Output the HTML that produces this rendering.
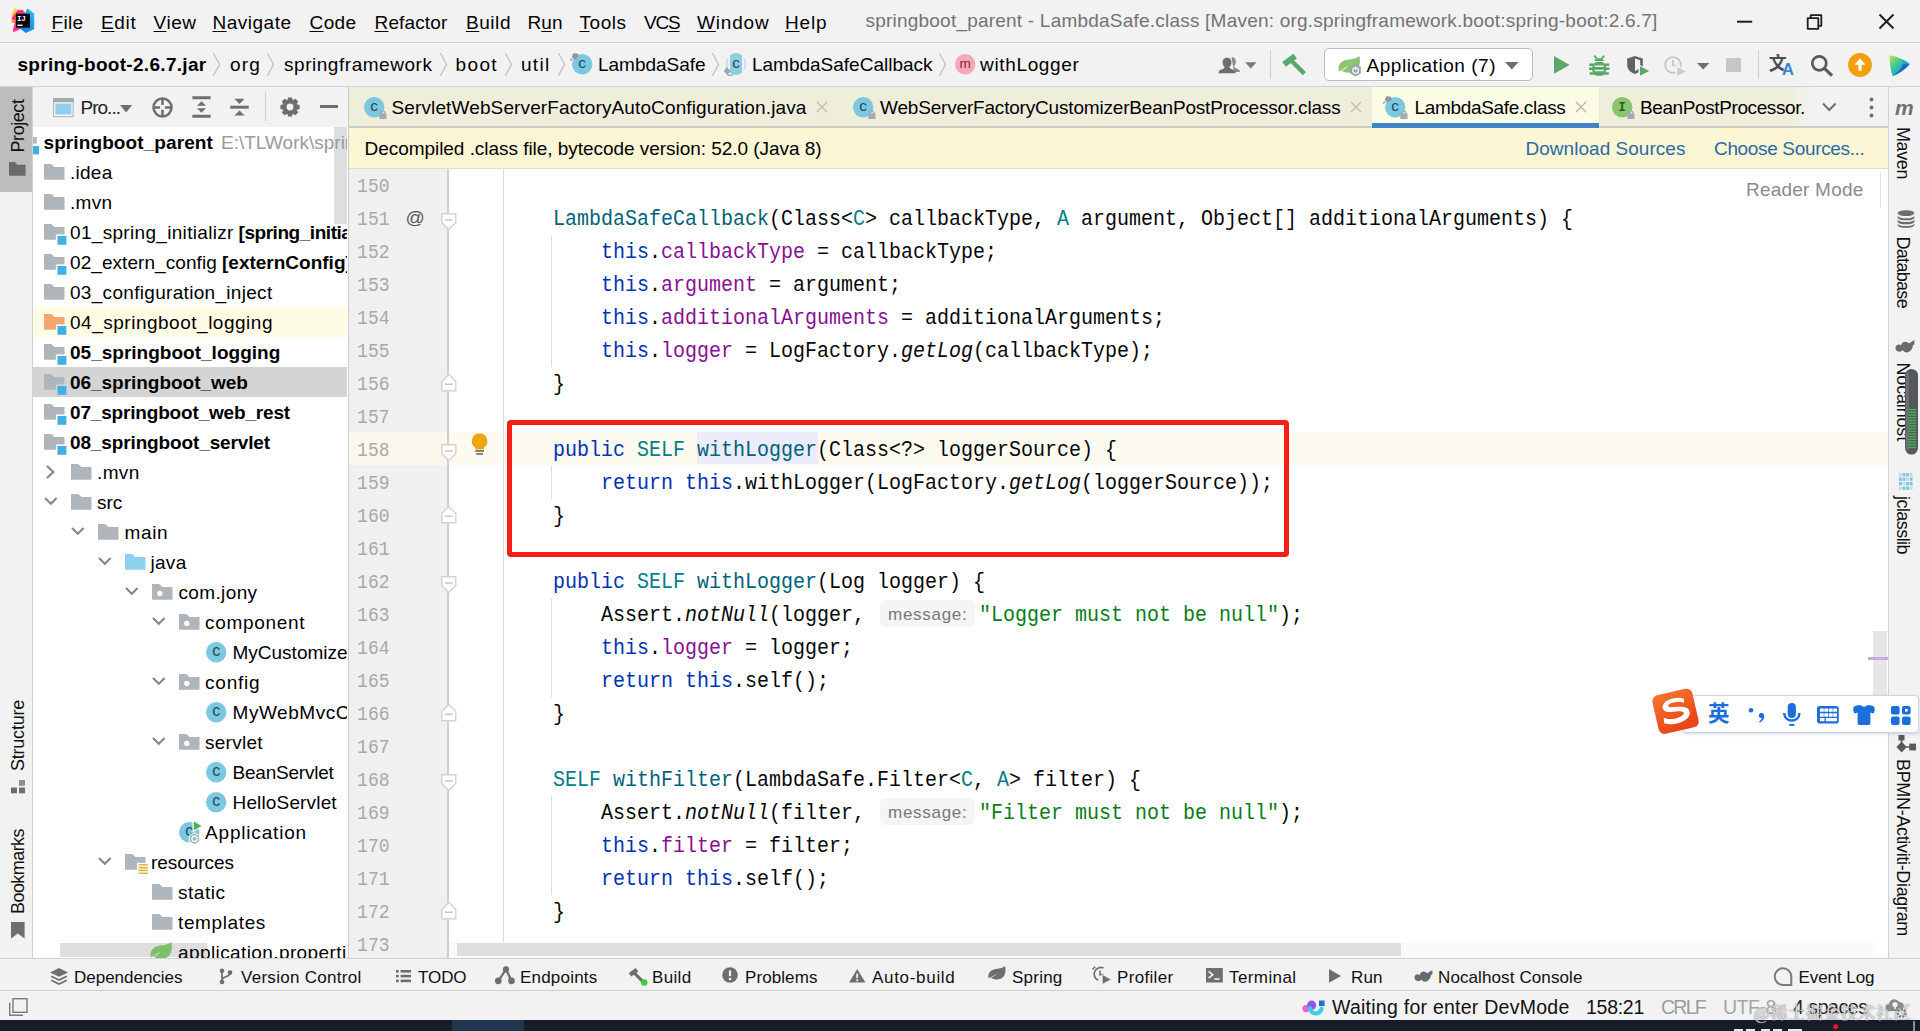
<!DOCTYPE html><html lang="en"><head><meta charset="utf-8"><title>springboot_parent - LambdaSafe.class</title><style>

html,body{margin:0;padding:0;}
body{width:1920px;height:1031px;position:relative;overflow:hidden;background:#f2f2f2;font-family:"Liberation Sans", "Noto Sans CJK SC", sans-serif;}
#r{position:absolute;left:0;top:0;width:1920px;height:1031px;overflow:hidden;}
#r div,#r svg,#r span.t{position:absolute;}
span.t{white-space:pre;line-height:24px;height:24px;}
span.m{font-family:"Liberation Mono", monospace;transform:scaleY(1.10);transform-origin:0 17.33px;}
u{text-decoration-thickness:1px;text-underline-offset:2px;}

</style></head><body><div id="r">
<div style="left:0px;top:0px;width:1920px;height:42px;background:#f2f2f2;"></div>
<div style="left:0px;top:42px;width:1920px;height:1px;background:#d1d1d1;"></div>
<div style="left:0px;top:43px;width:1920px;height:43px;background:#f2f2f2;"></div>
<div style="left:0px;top:86px;width:1920px;height:1px;background:#d1d1d1;"></div>
<div style="left:0px;top:87px;width:32px;height:871px;background:#f2f2f2;"></div>
<div style="left:0px;top:87px;width:32px;height:105px;background:#bdbdbd;"></div>
<div style="left:32px;top:87px;width:1px;height:871px;background:#d1d1d1;"></div>
<div style="left:33px;top:87px;width:315px;height:40px;background:#f2f2f2;"></div>
<div style="left:33px;top:127px;width:315px;height:831px;background:#ffffff;"></div>
<div style="left:33px;top:307px;width:314px;height:30px;background:#fffce6;"></div>
<div style="left:33px;top:367px;width:314px;height:30px;background:#d4d4d4;"></div>
<div style="left:334px;top:127px;width:13px;height:97px;background:#dedede;"></div>
<div style="left:60px;top:943px;width:147px;height:14px;background:#dedede;"></div>
<div style="left:347.6px;top:87px;width:1.1px;height:871px;background:#cbcbcb;"></div>
<div style="left:349px;top:87px;width:1539px;height:39px;background:#eeeedb;"></div>
<div style="left:349px;top:125.8px;width:1539px;height:2.2px;background:#cdcdc6;"></div>
<div style="left:1372px;top:87px;width:227px;height:39px;background:#fcfce6;"></div>
<div style="left:1372px;top:122.5px;width:227px;height:5px;background:#4083c9;"></div>
<div style="left:1788px;top:87px;width:100px;height:39px;background:linear-gradient(90deg,rgba(242,242,242,0) 0,#f2f2f2 24px);"></div>
<div style="left:349px;top:128px;width:1539px;height:40px;background:#fcf6d5;"></div>
<div style="left:349px;top:168px;width:1539px;height:1px;background:#dcdcdc;"></div>
<div style="left:349px;top:169px;width:1539px;height:789px;background:#ffffff;"></div>
<div style="left:349px;top:431.5px;width:1539px;height:33px;background:#fdfbf0;"></div>
<div style="left:349px;top:169px;width:98px;height:789px;background:#f0f0f0;"></div>
<div style="left:349px;top:431.5px;width:98px;height:33px;background:#faf8ec;"></div>
<div style="left:447px;top:169px;width:1.5px;height:789px;background:#cfcfcf;"></div>
<div style="left:503px;top:169px;width:1px;height:789px;background:#dcdcdc;"></div>
<div style="left:551px;top:235px;width:1px;height:132px;background:#dedede;"></div>
<div style="left:551px;top:466px;width:1px;height:33px;background:#dedede;"></div>
<div style="left:551px;top:598px;width:1px;height:99px;background:#dedede;"></div>
<div style="left:551px;top:796px;width:1px;height:99px;background:#dedede;"></div>
<div style="left:697px;top:432.2px;width:120.5px;height:32.3px;background:#edecfa;"></div>
<div style="left:880px;top:600.0px;width:95px;height:27px;background:#f5f5f5;border-radius:6px;"></div>
<div style="left:880px;top:798.0px;width:95px;height:27px;background:#f5f5f5;border-radius:6px;"></div>
<div style="left:1873px;top:631px;width:14px;height:66px;background:#e6e6e6;"></div>
<div style="left:1868px;top:657.3px;width:20px;height:2.6px;background:#c9a8e6;"></div>
<div style="left:1880px;top:172px;width:1px;height:36px;background:#e3e3e3;"></div>
<div style="left:449px;top:942px;width:1424px;height:16px;background:#fafafa;"></div>
<div style="left:457px;top:943px;width:944px;height:13px;background:#dfdfdf;"></div>
<div style="left:1888px;top:87px;width:1px;height:871px;background:#d1d1d1;"></div>
<div style="left:1889px;top:87px;width:31px;height:871px;background:#f2f2f2;"></div>
<div style="left:506.5px;top:420px;width:782.5px;height:137px;background:transparent;border:5px solid #f51f17;border-radius:4px;box-sizing:border-box;"></div>
<div style="left:1269.5px;top:50px;width:1.2px;height:29px;background:#cfcfcf;"></div>
<div style="left:1324px;top:48px;width:208.5px;height:32.5px;background:#ffffff;border:1.300px solid #bdbdbd;border-radius:5px;box-sizing:border-box;"></div>
<div style="left:1725.5px;top:57.5px;width:15.5px;height:14.8px;background:#c6c6c6;"></div>
<div style="left:1757.6px;top:50px;width:1.2px;height:29px;background:#cfcfcf;"></div>
<div style="left:264.8px;top:92px;width:1.2px;height:28.5px;background:#cfcfcf;"></div>
<div style="left:320px;top:105.4px;width:18.2px;height:3px;background:#6e6e6e;"></div>
<span class="t" style="left:51.50px;top:11.02px;font-size:19px;color:#000;letter-spacing:0.344px;"><u>F</u>ile</span>
<span class="t" style="left:101.00px;top:11.02px;font-size:19px;color:#000;letter-spacing:0.684px;"><u>E</u>dit</span>
<span class="t" style="left:153.50px;top:11.02px;font-size:19px;color:#000;letter-spacing:0.535px;"><u>V</u>iew</span>
<span class="t" style="left:212.50px;top:11.02px;font-size:19px;color:#000;letter-spacing:0.498px;"><u>N</u>avigate</span>
<span class="t" style="left:309.50px;top:11.02px;font-size:19px;color:#000;letter-spacing:0.391px;"><u>C</u>ode</span>
<span class="t" style="left:374.50px;top:11.02px;font-size:19px;color:#000;letter-spacing:0.146px;"><u>R</u>efactor</span>
<span class="t" style="left:466.00px;top:11.02px;font-size:19px;color:#000;letter-spacing:0.547px;"><u>B</u>uild</span>
<span class="t" style="left:527.50px;top:11.02px;font-size:19px;color:#000;letter-spacing:0.036px;">R<u>u</u>n</span>
<span class="t" style="left:579.50px;top:11.02px;font-size:19px;color:#000;letter-spacing:0.528px;"><u>T</u>ools</span>
<span class="t" style="left:644.00px;top:11.02px;font-size:19px;color:#000;letter-spacing:-1.198px;">VC<u>S</u></span>
<span class="t" style="left:697.00px;top:11.02px;font-size:19px;color:#000;letter-spacing:0.818px;"><u>W</u>indow</span>
<span class="t" style="left:785.00px;top:11.02px;font-size:19px;color:#000;letter-spacing:0.852px;"><u>H</u>elp</span>
<span class="t" style="left:865.50px;top:9.02px;font-size:19px;color:#737373;letter-spacing:0.215px;">springboot_parent - LambdaSafe.class [Maven: org.springframework.boot:spring-boot:2.6.7]</span>
<span class="t" style="left:17.50px;top:53.32px;font-size:19px;color:#000;font-weight:bold;letter-spacing:0.303px;">spring-boot-2.6.7.jar</span>
<span class="t" style="left:230.00px;top:53.32px;font-size:19px;color:#000;letter-spacing:1.177px;">org</span>
<span class="t" style="left:284.00px;top:53.32px;font-size:19px;color:#000;letter-spacing:0.537px;">springframework</span>
<span class="t" style="left:455.50px;top:53.32px;font-size:19px;color:#000;letter-spacing:1.379px;">boot</span>
<span class="t" style="left:521.00px;top:53.32px;font-size:19px;color:#000;letter-spacing:1.301px;">util</span>
<span class="t" style="left:598.00px;top:53.32px;font-size:19px;color:#000;letter-spacing:-0.025px;">LambdaSafe</span>
<span class="t" style="left:752.00px;top:53.32px;font-size:19px;color:#000;letter-spacing:-0.007px;">LambdaSafeCallback</span>
<span class="t" style="left:980.00px;top:53.32px;font-size:19px;color:#000;letter-spacing:0.655px;">withLogger</span>
<span class="t" style="left:1366.50px;top:54.32px;font-size:19px;color:#000;letter-spacing:0.536px;">Application (7)</span>
<span class="t" style="left:80.50px;top:96.02px;font-size:19px;color:#222;letter-spacing:-0.984px;">Pro...</span>
<span class="t" style="left:391.50px;top:96.02px;font-size:19px;color:#000;letter-spacing:0.124px;">ServletWebServerFactoryAutoConfiguration.java</span>
<span class="t" style="left:880.00px;top:96.02px;font-size:19px;color:#000;letter-spacing:-0.185px;">WebServerFactoryCustomizerBeanPostProcessor.class</span>
<span class="t" style="left:1414.50px;top:96.02px;font-size:19px;color:#000;letter-spacing:-0.333px;">LambdaSafe.class</span>
<span class="t" style="left:1640.00px;top:96.02px;font-size:19px;color:#000;letter-spacing:-0.398px;">BeanPostProcessor.</span>
<span class="t" style="left:364.50px;top:137.12px;font-size:19px;color:#000;letter-spacing:-0.043px;">Decompiled .class file, bytecode version: 52.0 (Java 8)</span>
<span class="t" style="left:1525.50px;top:137.12px;font-size:19px;color:#2d6aa2;letter-spacing:0.032px;">Download Sources</span>
<span class="t" style="left:1714.00px;top:137.12px;font-size:19px;color:#2d6aa2;letter-spacing:-0.342px;">Choose Sources...</span>
<span class="t" style="left:1746.00px;top:177.92px;font-size:19px;color:#8a8a8a;letter-spacing:0.216px;">Reader Mode</span>
<span class="t" style="left:43.50px;top:130.82px;font-size:19px;color:#000;font-weight:bold;letter-spacing:0.097px;">springboot_parent</span>
<span class="t" style="left:221.00px;top:130.82px;font-size:19px;color:#9a9a9a;width:126.00px;overflow:hidden;">E:\TLWork\springboot_parent</span>
<span class="t" style="left:70.00px;top:160.82px;font-size:19px;color:#000;letter-spacing:0.259px;">.idea</span>
<span class="t" style="left:70.00px;top:190.82px;font-size:19px;color:#000;letter-spacing:0.328px;">.mvn</span>
<span class="t" style="left:70.00px;top:220.82px;font-size:19px;color:#000;letter-spacing:0.316px;">01_spring_initializr</span>
<span class="t" style="left:238.50px;top:220.82px;font-size:19px;color:#000;font-weight:bold;width:108.50px;overflow:hidden;letter-spacing:-0.45px;">[spring_initializr]</span>
<span class="t" style="left:70.00px;top:250.82px;font-size:19px;color:#000;letter-spacing:0.064px;">02_extern_config</span>
<span class="t" style="left:222.00px;top:250.82px;font-size:19px;color:#000;font-weight:bold;width:125.00px;overflow:hidden;">[externConfig]</span>
<span class="t" style="left:70.00px;top:280.82px;font-size:19px;color:#000;letter-spacing:0.308px;">03_configuration_inject</span>
<span class="t" style="left:70.00px;top:310.82px;font-size:19px;color:#000;letter-spacing:0.510px;">04_springboot_logging</span>
<span class="t" style="left:70.00px;top:340.82px;font-size:19px;color:#000;font-weight:bold;letter-spacing:0.011px;">05_springboot_logging</span>
<span class="t" style="left:70.00px;top:370.82px;font-size:19px;color:#000;font-weight:bold;letter-spacing:-0.037px;">06_springboot_web</span>
<span class="t" style="left:70.00px;top:400.82px;font-size:19px;color:#000;font-weight:bold;letter-spacing:-0.175px;">07_springboot_web_rest</span>
<span class="t" style="left:70.00px;top:430.82px;font-size:19px;color:#000;font-weight:bold;letter-spacing:-0.131px;">08_springboot_servlet</span>
<span class="t" style="left:97.00px;top:460.82px;font-size:19px;color:#000;letter-spacing:0.378px;">.mvn</span>
<span class="t" style="left:97.00px;top:490.82px;font-size:19px;color:#000;letter-spacing:-0.043px;">src</span>
<span class="t" style="left:124.50px;top:520.82px;font-size:19px;color:#000;letter-spacing:0.653px;">main</span>
<span class="t" style="left:150.50px;top:550.82px;font-size:19px;color:#000;letter-spacing:0.285px;">java</span>
<span class="t" style="left:178.40px;top:580.82px;font-size:19px;color:#000;letter-spacing:0.384px;">com.jony</span>
<span class="t" style="left:205.00px;top:610.82px;font-size:19px;color:#000;letter-spacing:0.687px;">component</span>
<span class="t" style="left:232.50px;top:640.82px;font-size:19px;color:#000;width:114.50px;overflow:hidden;">MyCustomizer</span>
<span class="t" style="left:205.00px;top:670.82px;font-size:19px;color:#000;letter-spacing:0.783px;">config</span>
<span class="t" style="left:232.50px;top:700.82px;font-size:19px;color:#000;width:114.50px;overflow:hidden;letter-spacing:0.55px;">MyWebMvcConfig</span>
<span class="t" style="left:205.00px;top:730.82px;font-size:19px;color:#000;letter-spacing:0.262px;">servlet</span>
<span class="t" style="left:232.50px;top:760.82px;font-size:19px;color:#000;letter-spacing:-0.220px;">BeanServlet</span>
<span class="t" style="left:232.50px;top:790.82px;font-size:19px;color:#000;letter-spacing:0.155px;">HelloServlet</span>
<span class="t" style="left:205.00px;top:820.82px;font-size:19px;color:#000;letter-spacing:0.822px;">Application</span>
<span class="t" style="left:151.00px;top:850.82px;font-size:19px;color:#000;letter-spacing:-0.047px;">resources</span>
<span class="t" style="left:178.00px;top:880.82px;font-size:19px;color:#000;letter-spacing:0.523px;">static</span>
<span class="t" style="left:178.00px;top:910.82px;font-size:19px;color:#000;letter-spacing:0.625px;">templates</span>
<span class="t" style="left:178.00px;top:940.82px;font-size:19px;color:#000;width:169.00px;overflow:hidden;letter-spacing:0.4px;">application.properties</span>
<span class="t m" style="left:357.00px;top:174.80px;font-size:18px;color:#a9a9a9;letter-spacing:0.098px;">150</span>
<span class="t m" style="left:357.00px;top:207.80px;font-size:18px;color:#a9a9a9;letter-spacing:0.098px;">151</span>
<span class="t m" style="left:357.00px;top:240.80px;font-size:18px;color:#a9a9a9;letter-spacing:0.098px;">152</span>
<span class="t m" style="left:357.00px;top:273.80px;font-size:18px;color:#a9a9a9;letter-spacing:0.098px;">153</span>
<span class="t m" style="left:357.00px;top:306.80px;font-size:18px;color:#a9a9a9;letter-spacing:0.098px;">154</span>
<span class="t m" style="left:357.00px;top:339.80px;font-size:18px;color:#a9a9a9;letter-spacing:0.098px;">155</span>
<span class="t m" style="left:357.00px;top:372.80px;font-size:18px;color:#a9a9a9;letter-spacing:0.098px;">156</span>
<span class="t m" style="left:357.00px;top:405.80px;font-size:18px;color:#a9a9a9;letter-spacing:0.098px;">157</span>
<span class="t m" style="left:357.00px;top:438.80px;font-size:18px;color:#a9a9a9;letter-spacing:0.098px;">158</span>
<span class="t m" style="left:357.00px;top:471.80px;font-size:18px;color:#a9a9a9;letter-spacing:0.098px;">159</span>
<span class="t m" style="left:357.00px;top:504.80px;font-size:18px;color:#a9a9a9;letter-spacing:0.098px;">160</span>
<span class="t m" style="left:357.00px;top:537.80px;font-size:18px;color:#a9a9a9;letter-spacing:0.098px;">161</span>
<span class="t m" style="left:357.00px;top:570.80px;font-size:18px;color:#a9a9a9;letter-spacing:0.098px;">162</span>
<span class="t m" style="left:357.00px;top:603.80px;font-size:18px;color:#a9a9a9;letter-spacing:0.098px;">163</span>
<span class="t m" style="left:357.00px;top:636.80px;font-size:18px;color:#a9a9a9;letter-spacing:0.098px;">164</span>
<span class="t m" style="left:357.00px;top:669.80px;font-size:18px;color:#a9a9a9;letter-spacing:0.098px;">165</span>
<span class="t m" style="left:357.00px;top:702.80px;font-size:18px;color:#a9a9a9;letter-spacing:0.098px;">166</span>
<span class="t m" style="left:357.00px;top:735.80px;font-size:18px;color:#a9a9a9;letter-spacing:0.098px;">167</span>
<span class="t m" style="left:357.00px;top:768.80px;font-size:18px;color:#a9a9a9;letter-spacing:0.098px;">168</span>
<span class="t m" style="left:357.00px;top:801.80px;font-size:18px;color:#a9a9a9;letter-spacing:0.098px;">169</span>
<span class="t m" style="left:357.00px;top:834.80px;font-size:18px;color:#a9a9a9;letter-spacing:0.098px;">170</span>
<span class="t m" style="left:357.00px;top:867.80px;font-size:18px;color:#a9a9a9;letter-spacing:0.098px;">171</span>
<span class="t m" style="left:357.00px;top:900.80px;font-size:18px;color:#a9a9a9;letter-spacing:0.098px;">172</span>
<span class="t m" style="left:357.00px;top:933.80px;font-size:18px;color:#a9a9a9;letter-spacing:0.098px;">173</span>
<span class="t m" style="left:553.00px;top:208.47px;font-size:20px;color:#00627a;">LambdaSafeCallback</span>
<span class="t m" style="left:769.00px;top:208.47px;font-size:20px;color:#080808;">(Class&lt;</span>
<span class="t m" style="left:853.00px;top:208.47px;font-size:20px;color:#007e8a;">C</span>
<span class="t m" style="left:865.00px;top:208.47px;font-size:20px;color:#080808;">&gt; callbackType,</span>
<span class="t m" style="left:1057.00px;top:208.47px;font-size:20px;color:#007e8a;">A</span>
<span class="t m" style="left:1081.00px;top:208.47px;font-size:20px;color:#080808;">argument, Object[] additionalArguments) {</span>
<span class="t m" style="left:601.00px;top:241.47px;font-size:20px;color:#0033b3;">this</span>
<span class="t m" style="left:649.00px;top:241.47px;font-size:20px;color:#080808;">.</span>
<span class="t m" style="left:661.00px;top:241.47px;font-size:20px;color:#871094;">callbackType</span>
<span class="t m" style="left:817.00px;top:241.47px;font-size:20px;color:#080808;">= callbackType;</span>
<span class="t m" style="left:601.00px;top:274.47px;font-size:20px;color:#0033b3;">this</span>
<span class="t m" style="left:649.00px;top:274.47px;font-size:20px;color:#080808;">.</span>
<span class="t m" style="left:661.00px;top:274.47px;font-size:20px;color:#871094;">argument</span>
<span class="t m" style="left:769.00px;top:274.47px;font-size:20px;color:#080808;">= argument;</span>
<span class="t m" style="left:601.00px;top:307.47px;font-size:20px;color:#0033b3;">this</span>
<span class="t m" style="left:649.00px;top:307.47px;font-size:20px;color:#080808;">.</span>
<span class="t m" style="left:661.00px;top:307.47px;font-size:20px;color:#871094;">additionalArguments</span>
<span class="t m" style="left:901.00px;top:307.47px;font-size:20px;color:#080808;">= additionalArguments;</span>
<span class="t m" style="left:601.00px;top:340.47px;font-size:20px;color:#0033b3;">this</span>
<span class="t m" style="left:649.00px;top:340.47px;font-size:20px;color:#080808;">.</span>
<span class="t m" style="left:661.00px;top:340.47px;font-size:20px;color:#871094;">logger</span>
<span class="t m" style="left:745.00px;top:340.47px;font-size:20px;color:#080808;">= LogFactory.</span>
<span class="t m" style="left:901.00px;top:340.47px;font-size:20px;color:#080808;font-style:italic;">getLog</span>
<span class="t m" style="left:973.00px;top:340.47px;font-size:20px;color:#080808;">(callbackType);</span>
<span class="t m" style="left:553.00px;top:373.47px;font-size:20px;color:#080808;">}</span>
<span class="t m" style="left:553.00px;top:439.47px;font-size:20px;color:#0033b3;">public</span>
<span class="t m" style="left:637.00px;top:439.47px;font-size:20px;color:#007e8a;">SELF</span>
<span class="t m" style="left:697.00px;top:439.47px;font-size:20px;color:#00627a;">withLogger</span>
<span class="t m" style="left:817.00px;top:439.47px;font-size:20px;color:#080808;">(Class&lt;?&gt; loggerSource) {</span>
<span class="t m" style="left:601.00px;top:472.47px;font-size:20px;color:#0033b3;">return</span>
<span class="t m" style="left:685.00px;top:472.47px;font-size:20px;color:#0033b3;">this</span>
<span class="t m" style="left:733.00px;top:472.47px;font-size:20px;color:#080808;">.withLogger(LogFactory.</span>
<span class="t m" style="left:1009.00px;top:472.47px;font-size:20px;color:#080808;font-style:italic;">getLog</span>
<span class="t m" style="left:1081.00px;top:472.47px;font-size:20px;color:#080808;">(loggerSource));</span>
<span class="t m" style="left:553.00px;top:505.47px;font-size:20px;color:#080808;">}</span>
<span class="t m" style="left:553.00px;top:571.47px;font-size:20px;color:#0033b3;">public</span>
<span class="t m" style="left:637.00px;top:571.47px;font-size:20px;color:#007e8a;">SELF</span>
<span class="t m" style="left:697.00px;top:571.47px;font-size:20px;color:#00627a;">withLogger</span>
<span class="t m" style="left:817.00px;top:571.47px;font-size:20px;color:#080808;">(Log logger) {</span>
<span class="t m" style="left:601.00px;top:637.47px;font-size:20px;color:#0033b3;">this</span>
<span class="t m" style="left:649.00px;top:637.47px;font-size:20px;color:#080808;">.</span>
<span class="t m" style="left:661.00px;top:637.47px;font-size:20px;color:#871094;">logger</span>
<span class="t m" style="left:745.00px;top:637.47px;font-size:20px;color:#080808;">= logger;</span>
<span class="t m" style="left:601.00px;top:670.47px;font-size:20px;color:#0033b3;">return</span>
<span class="t m" style="left:685.00px;top:670.47px;font-size:20px;color:#0033b3;">this</span>
<span class="t m" style="left:733.00px;top:670.47px;font-size:20px;color:#080808;">.self();</span>
<span class="t m" style="left:553.00px;top:703.47px;font-size:20px;color:#080808;">}</span>
<span class="t m" style="left:553.00px;top:769.47px;font-size:20px;color:#007e8a;">SELF</span>
<span class="t m" style="left:613.00px;top:769.47px;font-size:20px;color:#00627a;">withFilter</span>
<span class="t m" style="left:733.00px;top:769.47px;font-size:20px;color:#080808;">(LambdaSafe.Filter&lt;</span>
<span class="t m" style="left:961.00px;top:769.47px;font-size:20px;color:#007e8a;">C</span>
<span class="t m" style="left:973.00px;top:769.47px;font-size:20px;color:#080808;">,</span>
<span class="t m" style="left:997.00px;top:769.47px;font-size:20px;color:#007e8a;">A</span>
<span class="t m" style="left:1009.00px;top:769.47px;font-size:20px;color:#080808;">&gt; filter) {</span>
<span class="t m" style="left:601.00px;top:835.47px;font-size:20px;color:#0033b3;">this</span>
<span class="t m" style="left:649.00px;top:835.47px;font-size:20px;color:#080808;">.</span>
<span class="t m" style="left:661.00px;top:835.47px;font-size:20px;color:#871094;">filter</span>
<span class="t m" style="left:745.00px;top:835.47px;font-size:20px;color:#080808;">= filter;</span>
<span class="t m" style="left:601.00px;top:868.47px;font-size:20px;color:#0033b3;">return</span>
<span class="t m" style="left:685.00px;top:868.47px;font-size:20px;color:#0033b3;">this</span>
<span class="t m" style="left:733.00px;top:868.47px;font-size:20px;color:#080808;">.self();</span>
<span class="t m" style="left:553.00px;top:901.47px;font-size:20px;color:#080808;">}</span>
<span class="t m" style="left:601.00px;top:604.47px;font-size:20px;color:#080808;">Assert.</span>
<span class="t m" style="left:685.00px;top:604.47px;font-size:20px;color:#080808;font-style:italic;">notNull</span>
<span class="t m" style="left:769.00px;top:604.47px;font-size:20px;color:#080808;">(logger,</span>
<span class="t" style="left:888.00px;top:602.61px;font-size:17px;color:#787878;letter-spacing:0.725px;">message:</span>
<span class="t m" style="left:979.00px;top:604.47px;font-size:20px;color:#067d17;">"Logger must not be null"</span>
<span class="t m" style="left:1279.00px;top:604.47px;font-size:20px;color:#080808;">);</span>
<span class="t m" style="left:601.00px;top:802.47px;font-size:20px;color:#080808;">Assert.</span>
<span class="t m" style="left:685.00px;top:802.47px;font-size:20px;color:#080808;font-style:italic;">notNull</span>
<span class="t m" style="left:769.00px;top:802.47px;font-size:20px;color:#080808;">(filter,</span>
<span class="t" style="left:888.00px;top:800.61px;font-size:17px;color:#787878;letter-spacing:0.725px;">message:</span>
<span class="t m" style="left:979.00px;top:802.47px;font-size:20px;color:#067d17;">"Filter must not be null"</span>
<span class="t m" style="left:1279.00px;top:802.47px;font-size:20px;color:#080808;">);</span>
<span class="t" style="left:-1.00px;top:-18.24px;font-size:18px;color:#111;letter-spacing:-0.433px;transform-origin:0 0;transform:translate(6px,152.5px) rotate(-90deg);left:0;top:0;">Project</span>
<span class="t" style="left:-1.00px;top:-18.24px;font-size:18px;color:#111;letter-spacing:-0.226px;transform-origin:0 0;transform:translate(6px,771px) rotate(-90deg);left:0;top:0;">Structure</span>
<span class="t" style="left:-1.00px;top:-18.24px;font-size:18px;color:#111;letter-spacing:-0.559px;transform-origin:0 0;transform:translate(6px,914px) rotate(-90deg);left:0;top:0;">Bookmarks</span>
<span class="t" style="left:-1.00px;top:-18.24px;font-size:18px;color:#111;letter-spacing:-0.406px;transform-origin:0 0;transform:translate(1915px,127px) rotate(90deg);left:0;top:0;">Maven</span>
<span class="t" style="left:-1.00px;top:-18.24px;font-size:18px;color:#111;letter-spacing:-0.695px;transform-origin:0 0;transform:translate(1915px,236.5px) rotate(90deg);left:0;top:0;">Database</span>
<span class="t" style="left:-1.00px;top:-18.24px;font-size:18px;color:#111;letter-spacing:-0.172px;transform-origin:0 0;transform:translate(1915px,362.5px) rotate(90deg);left:0;top:0;">Nocalhost</span>
<span class="t" style="left:-1.00px;top:-18.24px;font-size:18px;color:#111;letter-spacing:-0.559px;transform-origin:0 0;transform:translate(1915px,496px) rotate(90deg);left:0;top:0;">jclasslib</span>
<span class="t" style="left:-1.00px;top:-18.24px;font-size:18px;color:#111;letter-spacing:-0.335px;transform-origin:0 0;transform:translate(1915px,759px) rotate(90deg);left:0;top:0;">BPMN-Activiti-Diagram</span>
<span class="t" style="left:405.50px;top:205.72px;font-size:19px;color:#595959;">@</span>
<svg style="left:9px;top:6px;overflow:visible;" width="28" height="28" viewBox="0 0 28 28">
<defs><linearGradient id="lgA" x1="0" y1="0" x2="0" y2="1"><stop offset="0" stop-color="#fde04a"/><stop offset="1" stop-color="#f58a1f"/></linearGradient>
<linearGradient id="lgB" x1="0" y1="0" x2="1" y2="1"><stop offset="0" stop-color="#f0286e"/><stop offset="1" stop-color="#e93cb0"/></linearGradient>
<linearGradient id="lgC" x1="1" y1="0" x2="0" y2="1"><stop offset="0" stop-color="#21d2f5"/><stop offset=".5" stop-color="#1b8df0"/><stop offset="1" stop-color="#137df0"/></linearGradient></defs>
<path d="M5,2.2 L10.5,3.6 L8.5,17.5 L2.3,16.5 L3.2,9 Z" fill="url(#lgA)"/>
<path d="M8.5,4.6 L13.5,3.8 L16.5,7.5 L12,23 L4.2,26.2 L4,23.5 L6.5,14.5 L2.5,12.5 Z" fill="url(#lgB)"/>
<path d="M18.5,2.6 L25.2,7.5 L25.2,23 L16.8,27 L10.5,22 L16,7 Z" fill="url(#lgC)"/>
<rect x="7" y="7.7" width="14" height="14" fill="#0a0508"/>
<rect x="8.3" y="18.6" width="5.4" height="1.3" fill="#fff"/>
<text x="8" y="15" font-family="Liberation Mono, monospace" font-weight="bold" font-size="7.6" fill="#fff" letter-spacing="-0.4">IJ</text>
</svg>
<svg style="left:1737px;top:14px;overflow:visible;" width="160" height="16" viewBox="0 0 160 16"><path d="M0,7.700 H15.200" stroke="#1e1e1e" stroke-width="2"/>
<path d="M70.7,4.2 H81.3 V14.8 H70.7 Z M73.7,4 V1.2 H84.3 V11.8 H81.5" fill="none" stroke="#1e1e1e" stroke-width="1.800" stroke-linejoin="round"/>
<path d="M142.500,0.500 L156.500,14.500 M156.500,0.500 L142.500,14.500" stroke="#1e1e1e" stroke-width="1.900"/></svg>
<svg style="left:213px;top:52px;overflow:visible;" width="8" height="24" viewBox="0 0 8 24"><path d="M0.4,1 L6.6,12.4 L0.4,23.6" fill="none" stroke="#c2c2c2" stroke-width="1.3"/></svg>
<svg style="left:267px;top:52px;overflow:visible;" width="8" height="24" viewBox="0 0 8 24"><path d="M0.4,1 L6.6,12.4 L0.4,23.6" fill="none" stroke="#c2c2c2" stroke-width="1.3"/></svg>
<svg style="left:439.5px;top:52px;overflow:visible;" width="8" height="24" viewBox="0 0 8 24"><path d="M0.4,1 L6.6,12.4 L0.4,23.6" fill="none" stroke="#c2c2c2" stroke-width="1.3"/></svg>
<svg style="left:505px;top:52px;overflow:visible;" width="8" height="24" viewBox="0 0 8 24"><path d="M0.4,1 L6.6,12.4 L0.4,23.6" fill="none" stroke="#c2c2c2" stroke-width="1.3"/></svg>
<svg style="left:557.5px;top:52px;overflow:visible;" width="8" height="24" viewBox="0 0 8 24"><path d="M0.4,1 L6.6,12.4 L0.4,23.6" fill="none" stroke="#c2c2c2" stroke-width="1.3"/></svg>
<svg style="left:712.4px;top:52px;overflow:visible;" width="8" height="24" viewBox="0 0 8 24"><path d="M0.4,1 L6.6,12.4 L0.4,23.6" fill="none" stroke="#c2c2c2" stroke-width="1.3"/></svg>
<svg style="left:939.2px;top:52px;overflow:visible;" width="8" height="24" viewBox="0 0 8 24"><path d="M0.4,1 L6.6,12.4 L0.4,23.6" fill="none" stroke="#c2c2c2" stroke-width="1.3"/></svg>
<svg style="left:570.5999999999999px;top:52.8px;overflow:visible;" width="22.4" height="22.4" viewBox="0 0 22.4 22.4"><circle cx="11.2" cy="11.2" r="10.2" fill="#7cc8e1"/><text x="11.2" y="15.2" text-anchor="middle" font-family="Liberation Sans, sans-serif"  font-size="15.5" fill="#25485a">c</text><path d="M2.2,0.2 L6.5,0.6 L8,3.2 L5,6 L2.5,6 L0.8,3.8 Z" fill="#8f989f"/><path d="M1,5.5 L-0.8,7.5" stroke="#8f989f" stroke-width="1.2"/></svg>
<svg style="left:725px;top:53px;overflow:visible;" width="24" height="24" viewBox="0 0 24 24"><path d="M5,2.2 A10.2,10.2 0 0 1 17,2.2 L17,19.8 A10.2,10.2 0 0 1 5,19.8 Z" fill="#8ecde3"/>
<path d="M3.2,3.8 A10.2,10.2 0 0 0 3.2,18.2 Z M18.8,3.8 A10.2,10.2 0 0 1 18.8,18.2 Z" fill="#c6e4ee"/>
<text x="11" y="15" text-anchor="middle" font-family="Liberation Sans, sans-serif" font-size="15.5" fill="#25485a">c</text>
<path d="M1.5,14 L5.5,17.8 L2.5,22.2 L-1.2,18.2 Z" fill="#9aa4ab"/><path d="M2.5,22.2 L8,22.2" stroke="#9aa4ab" stroke-width="1.4"/></svg>
<svg style="left:953.8px;top:52.8px;overflow:visible;" width="22.4" height="22.4" viewBox="0 0 22.4 22.4"><circle cx="11.2" cy="11.2" r="10.2" fill="#f5a8b8"/><text x="11.2" y="15.0" text-anchor="middle" font-family="Liberation Sans, sans-serif"  font-size="13.5" fill="#7c2a3a">m</text></svg>
<svg style="left:362.55px;top:95.8px;overflow:visible;" width="22.4" height="22.4" viewBox="0 0 22.4 22.4"><circle cx="11.2" cy="11.2" r="10.2" fill="#7cc8e1"/><text x="11.2" y="15.2" text-anchor="middle" font-family="Liberation Sans, sans-serif"  font-size="15.5" fill="#25485a">c</text><path d="M18,17.800 v-1.100 a1.900,1.900 0 0 1 3.800,0 v1.100" fill="none" stroke="#a3acb3" stroke-width="1.300"/><rect x="16.300" y="17.300" width="7.200" height="5.700" fill="#a3acb3"/></svg>
<svg style="left:851.8px;top:95.8px;overflow:visible;" width="22.4" height="22.4" viewBox="0 0 22.4 22.4"><circle cx="11.2" cy="11.2" r="10.2" fill="#7cc8e1"/><text x="11.2" y="15.2" text-anchor="middle" font-family="Liberation Sans, sans-serif"  font-size="15.5" fill="#25485a">c</text><path d="M18,17.800 v-1.100 a1.900,1.900 0 0 1 3.800,0 v1.100" fill="none" stroke="#a3acb3" stroke-width="1.300"/><rect x="16.300" y="17.300" width="7.200" height="5.700" fill="#a3acb3"/></svg>
<svg style="left:1384.3px;top:95.8px;overflow:visible;" width="22.4" height="22.4" viewBox="0 0 22.4 22.4"><circle cx="11.2" cy="11.2" r="10.2" fill="#7cc8e1"/><text x="11.2" y="15.2" text-anchor="middle" font-family="Liberation Sans, sans-serif"  font-size="15.5" fill="#25485a">c</text><path d="M2.2,0.2 L6.5,0.6 L8,3.2 L5,6 L2.5,6 L0.8,3.8 Z" fill="#8f989f"/><path d="M1,5.5 L-0.8,7.5" stroke="#8f989f" stroke-width="1.2"/><path d="M18,17.800 v-1.100 a1.900,1.900 0 0 1 3.800,0 v1.100" fill="none" stroke="#a3acb3" stroke-width="1.300"/><rect x="16.300" y="17.300" width="7.200" height="5.700" fill="#a3acb3"/></svg>
<svg style="left:1610.8px;top:95.8px;overflow:visible;" width="22.4" height="22.4" viewBox="0 0 22.4 22.4"><circle cx="11.2" cy="11.2" r="10.2" fill="#8cc46c"/><text x="11.2" y="15.0" text-anchor="middle" font-family="Liberation Mono, monospace" font-weight="bold" font-size="12" fill="#2f5a1f">I</text><path d="M18,17.800 v-1.100 a1.900,1.900 0 0 1 3.800,0 v1.100" fill="none" stroke="#a3acb3" stroke-width="1.300"/><rect x="16.300" y="17.300" width="7.200" height="5.700" fill="#a3acb3"/></svg>
<svg style="left:816px;top:101px;overflow:visible;" width="12" height="12" viewBox="0 0 12 12"><path d="M0.8,0.8 L11.2,11.2 M11.2,0.8 L0.8,11.2" stroke="#c0c0ae" stroke-width="1.3"/></svg>
<svg style="left:1349.5px;top:101px;overflow:visible;" width="12" height="12" viewBox="0 0 12 12"><path d="M0.8,0.8 L11.2,11.2 M11.2,0.8 L0.8,11.2" stroke="#c0c0ae" stroke-width="1.3"/></svg>
<svg style="left:1574.5px;top:101px;overflow:visible;" width="12" height="12" viewBox="0 0 12 12"><path d="M0.8,0.8 L11.2,11.2 M11.2,0.8 L0.8,11.2" stroke="#b6b6a4" stroke-width="1.3"/></svg>
<svg style="left:1822px;top:102px;overflow:visible;" width="15" height="10" viewBox="0 0 15 10"><path d="M1,1.5 L7.3,8 L13.6,1.5" fill="none" stroke="#6e6e6e" stroke-width="2"/></svg>
<svg style="left:1868.5px;top:97px;overflow:visible;" width="5" height="22" viewBox="0 0 5 22"><circle cx="2.5" cy="2.5" r="1.9" fill="#6e6e6e"/><circle cx="2.5" cy="10.5" r="1.9" fill="#6e6e6e"/><circle cx="2.5" cy="18.5" r="1.9" fill="#6e6e6e"/></svg>
<svg style="left:1219px;top:56px;overflow:visible;" width="22" height="18" viewBox="0 0 22 18"><path d="M12.5,1 c3,0 4.4,2.2 4.4,4.6 c0,2 -0.9,3.6 -2,4.5 c0.2,1.4 1.5,1.9 3.2,2.6 c1.8,0.7 2.8,1.3 2.9,3.3 h-6 Z" fill="#8a8a8a"/>
<path d="M8,1.6 c3,0 4.5,2.2 4.5,4.8 c0,2.1 -0.9,3.7 -2.1,4.7 c0.1,1.3 1.4,1.8 3.2,2.5 c1.9,0.7 3,1.4 3.1,3.6 H-0.6 c0.1,-2.2 1.2,-2.9 3.1,-3.6 c1.8,-0.7 3.1,-1.2 3.2,-2.5 c-1.2,-1 -2.1,-2.6 -2.1,-4.7 c0,-2.600 1.500,-4.800 4.400,-4.800 Z" fill="#6e6e6e"/></svg>
<svg style="left:1245px;top:62px;overflow:visible;" width="12" height="7" viewBox="0 0 12 7"><path d="M0,0.3 H11.6 L5.8,6.4 Z" fill="#7a7a7a"/></svg>
<svg style="left:1282px;top:54px;overflow:visible;" width="25" height="22" viewBox="0 0 25 22"><path d="M3,9.600 L13.200,2.200" stroke="#59a869" stroke-width="5.800"/><path d="M9.400,6.800 L22.400,19.600" stroke="#59a869" stroke-width="4.300"/><path d="M1,7.300 L4.800,12" stroke="#59a869" stroke-width="2"/></svg>
<svg style="left:1338px;top:56.2px;overflow:visible;" width="24.0" height="18.0" viewBox="0 0 24.0 18.0"><g transform="scale(1.0)"><path d="M0.8,15.4 C-0.8,9 3.5,4.2 10.5,3.6 C15,3.200 18.500,2.600 21.200,0 C22.600,4.600 22.200,10 19.200,13.600 C15.500,17.800 7.500,17.600 3.600,14.600 C5.500,13.800 8.500,12.200 11,9.600 C7.500,11.800 4,13.600 0.800,15.400 Z" fill="#8cc474"/></g></svg>
<svg style="left:1348.5px;top:63.5px;overflow:visible;" width="13" height="13" viewBox="0 0 13 13"><path d="M6.500,0 L11.800,3 L11.800,9.500 L6.500,12.600 L1.200,9.500 L1.200,3 Z" fill="#9aa4ab"/><circle cx="6.5" cy="6.500" r="2.900" fill="none" stroke="#fff" stroke-width="1.2"/><path d="M6.500,2.600 V6.200" stroke="#fff" stroke-width="1.3"/></svg>
<svg style="left:1505px;top:61.5px;overflow:visible;" width="14" height="8" viewBox="0 0 14 8"><path d="M0,0 H13.600 L6.800,7.600 Z" fill="#6e6e6e"/></svg>
<svg style="left:1553.5px;top:56px;overflow:visible;" width="16" height="18" viewBox="0 0 16 18"><path d="M0,0 L15.600,8.900 L0,17.800 Z" fill="#59a869"/></svg>
<svg style="left:1588.5px;top:54.5px;overflow:visible;" width="21" height="21" viewBox="0 0 21 21"><path d="M5.200,0.600 L7.800,3.600 M15.200,0.600 L12.600,3.600" stroke="#59a869" stroke-width="1.700"/>
<path d="M6.200,4.600 C7.200,2.800 13.200,2.800 14.200,4.600 L15,6 H5.400 Z" fill="#59a869"/>
<rect x="3.300" y="6.800" width="13.800" height="14" rx="5.500" fill="#59a869"/>
<path d="M0.300,9.800 H4.500 M16,9.800 H20.200 M0,13.800 H4.500 M16,13.800 H20.500 M0.600,18.400 H4.800 M15.600,18.400 H19.800" stroke="#59a869" stroke-width="2.500"/>
<path d="M5.600,11.300 H14.800 M5.600,15.400 H14.800" stroke="#f2f2f2" stroke-width="1.500"/></svg>
<svg style="left:1627px;top:56px;overflow:visible;" width="24" height="20" viewBox="0 0 24 20"><path d="M0.200,2.400 L8,0 L15.800,2.400 V9 C15.800,13.500 12.500,16.500 8,18 C3.500,16.500 0.200,13.500 0.200,9 Z" fill="#5f6366"/>
<path d="M8,2.600 L13.200,4.200 V9 C13.200,11.600 11.200,13.800 8,15 Z" fill="#f2f2f2"/>
<path d="M11.500,8.200 L23.300,14.300 L11.500,20.400 Z" fill="#f2f2f2"/><path d="M13,10.300 L22.200,15 L13,19.700 Z" fill="#59a869"/></svg>
<svg style="left:1663.5px;top:55.5px;overflow:visible;" width="24" height="21" viewBox="0 0 24 21"><circle cx="9" cy="9" r="7.800" fill="none" stroke="#c6c6c6" stroke-width="1.800"/><path d="M9,4 V9.500 H13" fill="none" stroke="#c6c6c6" stroke-width="1.700"/>
<path d="M11.500,8.700 L23.500,14.800 L11.500,20.900 Z" fill="#f2f2f2"/><path d="M13.200,11 L22.300,15.500 L13.200,20 Z" fill="#cdcdcd"/></svg>
<svg style="left:1697px;top:62.5px;overflow:visible;" width="13" height="7" viewBox="0 0 13 7"><path d="M0,0 H12.400 L6.200,6.600 Z" fill="#6e6e6e"/></svg>
<svg style="left:1769px;top:54px;overflow:visible;" width="27" height="23" viewBox="0 0 27 23"><text x="-0.300" y="16.300" font-family="Liberation Sans, Noto Sans CJK SC, sans-serif" font-weight="bold" font-size="18" fill="#4d4d4d">文</text>
<text x="13" y="21.400" font-family="Liberation Sans, sans-serif" font-weight="bold" font-size="16.500" fill="#3a84d8" stroke="#f2f2f2" stroke-width="0.600" paint-order="stroke">A</text></svg>
<svg style="left:1810px;top:54px;overflow:visible;" width="24" height="23" viewBox="0 0 24 23"><circle cx="9.300" cy="9.300" r="7" fill="none" stroke="#595959" stroke-width="2.700"/><path d="M14.400,14.400 L22,21.600" stroke="#595959" stroke-width="3.200"/></svg>
<svg style="left:1848px;top:52.8px;overflow:visible;" width="24" height="24" viewBox="0 0 24 24"><circle cx="12" cy="12" r="11.900" fill="#f0a010"/><path d="M12,5.500 L17.500,11.800 H13.600 V17.800 H10.400 V11.800 H6.500 Z" fill="#fff"/></svg>
<svg style="left:1888px;top:53.5px;overflow:visible;" width="23" height="23" viewBox="0 0 23 23"><defs><linearGradient id="lgD" x1="0" y1="0" x2="0.900" y2="1"><stop offset="0" stop-color="#cfe43a"/><stop offset=".4" stop-color="#3cc79a"/><stop offset="1" stop-color="#1b8fc6"/></linearGradient></defs>
<path d="M1.600,1.300 C8,2 17,6 21.700,10.100 C18,15 10,20.500 4.500,22.100 C2.500,16 1.500,8 1.600,1.300 Z" fill="url(#lgD)"/>
<path d="M21.700,10.100 C18,15 10,20.500 4.500,22.100 C9.500,18.500 13.500,14.500 14.800,10.300 C16.500,9 19.500,9 21.700,10.100 Z" fill="#1a60c6" opacity=".9"/>
<path d="M21.700,10.100 C19,8 16.500,6.500 13.500,5 C14.500,7 15,9 14.800,10.300 Z" fill="#2aa7c8" opacity=".9"/></svg>
<svg style="left:52.8px;top:98px;overflow:visible;" width="21" height="19.4" viewBox="0 0 21 19.4"><rect x="0.600" y="0.600" width="19.500" height="18" fill="#fbfbfb" stroke="#b3bbc1" stroke-width="1.200"/><rect x="0" y="0" width="20.700" height="4.300" fill="#a3acb3"/><rect x="2.300" y="5.600" width="16.100" height="11" fill="#8ed0ee"/></svg>
<svg style="left:120.2px;top:104.6px;overflow:visible;" width="13" height="8" viewBox="0 0 13 8"><path d="M0,0 H12.200 L6.100,7.400 Z" fill="#6e6e6e"/></svg>
<svg style="left:151.5px;top:97px;overflow:visible;" width="21" height="21" viewBox="0 0 21 21"><circle cx="10.500" cy="10.400" r="9" fill="none" stroke="#6e6e6e" stroke-width="2.500"/><path d="M10.500,1 V8 M10.500,12.800 V19.800 M1.100,10.400 H8.100 M12.900,10.400 H19.900" stroke="#6e6e6e" stroke-width="2.500"/></svg>
<svg style="left:191.5px;top:96px;overflow:visible;" width="19" height="22" viewBox="0 0 19 22"><path d="M0.400,1.800 H18.600 M0.400,20.200 H18.600" stroke="#6e6e6e" stroke-width="2.900"/><path d="M9.500,5.200 L14,9.700 H5 Z M9.500,16.800 L14,12.300 H5 Z" fill="#6e6e6e"/></svg>
<svg style="left:230.3px;top:96px;overflow:visible;" width="19" height="22" viewBox="0 0 19 22"><path d="M0.200,11.200 H18.800" stroke="#6e6e6e" stroke-width="2.900"/><path d="M9.500,8 L14.600,2.800 H4.400 Z M9.500,14.400 L14.600,19.600 H4.400 Z" fill="#6e6e6e"/></svg>
<svg style="left:280px;top:97.4px;overflow:visible;" width="20" height="20" viewBox="0 0 20 20"><path d="M19.60,8.05 L19.60,11.95 L16.66,12.74 L16.64,12.77 L18.17,15.41 L15.41,18.17 L12.77,16.64 L12.74,16.66 L11.95,19.60 L8.05,19.60 L7.26,16.66 L7.23,16.64 L4.59,18.17 L1.83,15.41 L3.36,12.77 L3.34,12.74 L0.40,11.95 L0.40,8.05 L3.34,7.26 L3.36,7.23 L1.83,4.59 L4.59,1.83 L7.23,3.36 L7.26,3.34 L8.05,0.40 L11.95,0.40 L12.74,3.34 L12.77,3.36 L15.41,1.83 L18.17,4.59 L16.64,7.23 L16.66,7.26 Z M13.400,10 A3.400,3.400 0 1 0 6.600,10 A3.400,3.400 0 1 0 13.400,10 Z" fill="#6e6e6e" fill-rule="evenodd"/></svg>
<svg style="left:9.4px;top:161.5px;overflow:visible;" width="17" height="14" viewBox="0 0 17 14"><path d="M0,0 H6 L8.200,2.800 H16.600 V13.700 H0 Z" fill="#6a6a6a"/></svg>
<svg style="left:10.5px;top:780.3px;overflow:visible;" width="15" height="14" viewBox="0 0 15 14"><rect x="8" y="0" width="6" height="5.800" fill="#8f8f8f"/><rect x="0" y="7.500" width="6" height="5.800" fill="#6e6e6e"/><rect x="8" y="7.500" width="6" height="5.800" fill="#6e6e6e"/></svg>
<svg style="left:10.5px;top:922px;overflow:visible;" width="14" height="17" viewBox="0 0 14 17"><path d="M0,0 H13.600 V16.400 L6.800,11.600 L0,16.400 Z" fill="#6e6e6e"/></svg>
<svg style="left:33px;top:134.3px;overflow:visible;" width="14" height="23" viewBox="0 0 14 23"><rect x="0" y="3" width="3.900" height="6.600" fill="#b4babf"/><rect x="0" y="12.100" width="6" height="8.300" fill="#3fb0e4"/></svg>
<svg style="left:43.6px;top:164.3px;overflow:visible;" width="25" height="23" viewBox="0 0 25 23"><path d="M0,0 H7.200 L10.400,3.100 H20.500 V15.700 H0 Z" fill="#aeb5bb"/></svg>
<svg style="left:43.6px;top:194.3px;overflow:visible;" width="25" height="23" viewBox="0 0 25 23"><path d="M0,0 H7.200 L10.400,3.100 H20.500 V15.700 H0 Z" fill="#aeb5bb"/></svg>
<svg style="left:43.6px;top:224.3px;overflow:visible;" width="25" height="23" viewBox="0 0 25 23"><path d="M0,0 H7.200 L10.400,3.100 H20.500 V15.700 H0 Z" fill="#aeb5bb"/><rect x="11.900" y="10.400" width="10.500" height="10.400" fill="#fff"/><rect x="13.500" y="12" width="8.900" height="8.800" fill="#3fb0e4"/></svg>
<svg style="left:43.6px;top:254.3px;overflow:visible;" width="25" height="23" viewBox="0 0 25 23"><path d="M0,0 H7.200 L10.400,3.100 H20.500 V15.700 H0 Z" fill="#aeb5bb"/><rect x="11.900" y="10.400" width="10.500" height="10.400" fill="#fff"/><rect x="13.500" y="12" width="8.900" height="8.800" fill="#3fb0e4"/></svg>
<svg style="left:43.6px;top:284.3px;overflow:visible;" width="25" height="23" viewBox="0 0 25 23"><path d="M0,0 H7.200 L10.400,3.100 H20.500 V15.700 H0 Z" fill="#aeb5bb"/></svg>
<svg style="left:43.6px;top:314.3px;overflow:visible;" width="25" height="23" viewBox="0 0 25 23"><path d="M0,0 H7.200 L10.400,3.100 H20.500 V15.700 H0 Z" fill="#f4a574"/><rect x="11.900" y="10.400" width="10.500" height="10.400" fill="#fffce6"/><rect x="13.500" y="12" width="8.900" height="8.800" fill="#3fb0e4"/></svg>
<svg style="left:43.6px;top:344.3px;overflow:visible;" width="25" height="23" viewBox="0 0 25 23"><path d="M0,0 H7.200 L10.400,3.100 H20.500 V15.700 H0 Z" fill="#aeb5bb"/><rect x="11.900" y="10.400" width="10.500" height="10.400" fill="#fff"/><rect x="13.500" y="12" width="8.900" height="8.800" fill="#3fb0e4"/></svg>
<svg style="left:43.6px;top:374.3px;overflow:visible;" width="25" height="23" viewBox="0 0 25 23"><path d="M0,0 H7.200 L10.400,3.100 H20.500 V15.700 H0 Z" fill="#aeb5bb"/><rect x="11.900" y="10.400" width="10.500" height="10.400" fill="#d4d4d4"/><rect x="13.500" y="12" width="8.900" height="8.800" fill="#3fb0e4"/></svg>
<svg style="left:43.6px;top:404.3px;overflow:visible;" width="25" height="23" viewBox="0 0 25 23"><path d="M0,0 H7.200 L10.400,3.100 H20.500 V15.700 H0 Z" fill="#aeb5bb"/><rect x="11.900" y="10.400" width="10.500" height="10.400" fill="#fff"/><rect x="13.500" y="12" width="8.900" height="8.800" fill="#3fb0e4"/></svg>
<svg style="left:43.6px;top:434.3px;overflow:visible;" width="25" height="23" viewBox="0 0 25 23"><path d="M0,0 H7.200 L10.400,3.100 H20.500 V15.700 H0 Z" fill="#aeb5bb"/><rect x="11.900" y="10.400" width="10.500" height="10.400" fill="#fff"/><rect x="13.500" y="12" width="8.900" height="8.800" fill="#3fb0e4"/></svg>
<svg style="left:70.6px;top:464.3px;overflow:visible;" width="25" height="23" viewBox="0 0 25 23"><path d="M0,0 H7.200 L10.400,3.100 H20.500 V15.700 H0 Z" fill="#aeb5bb"/></svg>
<svg style="left:70.6px;top:494.3px;overflow:visible;" width="25" height="23" viewBox="0 0 25 23"><path d="M0,0 H7.200 L10.400,3.100 H20.500 V15.700 H0 Z" fill="#aeb5bb"/></svg>
<svg style="left:97.6px;top:524.3px;overflow:visible;" width="25" height="23" viewBox="0 0 25 23"><path d="M0,0 H7.200 L10.400,3.100 H20.500 V15.700 H0 Z" fill="#aeb5bb"/></svg>
<svg style="left:124.6px;top:554.3px;overflow:visible;" width="25" height="23" viewBox="0 0 25 23"><path d="M0,0 H7.200 L10.400,3.100 H20.500 V15.700 H0 Z" fill="#8fd0ee"/></svg>
<svg style="left:151.6px;top:584.3px;overflow:visible;" width="25" height="23" viewBox="0 0 25 23"><path d="M0,0 H7.200 L10.400,3.100 H20.500 V15.700 H0 Z" fill="#aeb5bb"/><circle cx="7.800" cy="9.500" r="2.700" fill="#fff"/></svg>
<svg style="left:178.6px;top:614.3px;overflow:visible;" width="25" height="23" viewBox="0 0 25 23"><path d="M0,0 H7.200 L10.400,3.100 H20.500 V15.700 H0 Z" fill="#aeb5bb"/><circle cx="7.800" cy="9.500" r="2.700" fill="#fff"/></svg>
<svg style="left:178.6px;top:674.3px;overflow:visible;" width="25" height="23" viewBox="0 0 25 23"><path d="M0,0 H7.200 L10.400,3.100 H20.500 V15.700 H0 Z" fill="#aeb5bb"/><circle cx="7.800" cy="9.500" r="2.700" fill="#fff"/></svg>
<svg style="left:178.6px;top:734.3px;overflow:visible;" width="25" height="23" viewBox="0 0 25 23"><path d="M0,0 H7.200 L10.400,3.100 H20.500 V15.700 H0 Z" fill="#aeb5bb"/><circle cx="7.800" cy="9.500" r="2.700" fill="#fff"/></svg>
<svg style="left:124.6px;top:854.3px;overflow:visible;" width="25" height="23" viewBox="0 0 25 23"><path d="M0,0 H7.200 L10.400,3.100 H20.500 V15.700 H0 Z" fill="#aeb5bb"/><rect x="12" y="8.800" width="12" height="12.500" fill="#fff"/><path d="M13.600,10.800 H22.800 M13.600,13.600 H22.800 M13.600,16.400 H22.800 M13.600,19.200 H22.800" stroke="#e2b33f" stroke-width="1.600"/></svg>
<svg style="left:151.6px;top:884.3px;overflow:visible;" width="25" height="23" viewBox="0 0 25 23"><path d="M0,0 H7.200 L10.400,3.100 H20.500 V15.700 H0 Z" fill="#aeb5bb"/></svg>
<svg style="left:151.6px;top:914.3px;overflow:visible;" width="25" height="23" viewBox="0 0 25 23"><path d="M0,0 H7.200 L10.400,3.100 H20.500 V15.700 H0 Z" fill="#aeb5bb"/></svg>
<svg style="left:204.60000000000002px;top:641.4px;overflow:visible;" width="22.4" height="22.4" viewBox="0 0 22.4 22.4"><circle cx="11.2" cy="11.2" r="10.2" fill="#7cc8e1"/><text x="11.2" y="15.399999999999999" text-anchor="middle" font-family="Liberation Sans, sans-serif"  font-size="16" fill="#25485a">c</text></svg>
<svg style="left:204.60000000000002px;top:701.4px;overflow:visible;" width="22.4" height="22.4" viewBox="0 0 22.4 22.4"><circle cx="11.2" cy="11.2" r="10.2" fill="#7cc8e1"/><text x="11.2" y="15.399999999999999" text-anchor="middle" font-family="Liberation Sans, sans-serif"  font-size="16" fill="#25485a">c</text></svg>
<svg style="left:204.60000000000002px;top:761.4px;overflow:visible;" width="22.4" height="22.4" viewBox="0 0 22.4 22.4"><circle cx="11.2" cy="11.2" r="10.2" fill="#7cc8e1"/><text x="11.2" y="15.399999999999999" text-anchor="middle" font-family="Liberation Sans, sans-serif"  font-size="16" fill="#25485a">c</text></svg>
<svg style="left:204.60000000000002px;top:791.4px;overflow:visible;" width="22.4" height="22.4" viewBox="0 0 22.4 22.4"><circle cx="11.2" cy="11.2" r="10.2" fill="#7cc8e1"/><text x="11.2" y="15.399999999999999" text-anchor="middle" font-family="Liberation Sans, sans-serif"  font-size="16" fill="#25485a">c</text></svg>
<svg style="left:177.5px;top:821.1999999999999px;overflow:visible;" width="22.4" height="22.4" viewBox="0 0 22.4 22.4"><circle cx="11.2" cy="11.2" r="10.2" fill="#7cc8e1"/><text x="11.2" y="15.399999999999999" text-anchor="middle" font-family="Liberation Sans, sans-serif"  font-size="16" fill="#25485a">c</text><path d="M14.600,-1.600 L25.600,4.900 L14.600,11.400 Z" fill="#fff"/><path d="M15.900,0.400 L23.600,4.900 L15.900,9.400 Z" fill="#4caf50"/><path d="M16.500,11.800 L21.700,14.800 L21.700,20.600 L16.500,23.600 L11.300,20.600 L11.300,14.800 Z" fill="#9fb4c4" stroke="#fff" stroke-width="1"/><circle cx="16.500" cy="17.800" r="2.600" fill="none" stroke="#fff" stroke-width="1.200"/></svg>
<svg style="left:45.5px;top:465.09999999999997px;overflow:visible;" width="9" height="14" viewBox="0 0 9 14"><path d="M1,1 L7.400,7 L1,13" fill="none" stroke="#868686" stroke-width="2.100"/></svg>
<svg style="left:43.8px;top:497.0px;overflow:visible;" width="14" height="9" viewBox="0 0 14 9"><path d="M1,1 L6.800,6.800 L12.600,1" fill="none" stroke="#868686" stroke-width="2.100"/></svg>
<svg style="left:70.80000000000001px;top:527.0px;overflow:visible;" width="14" height="9" viewBox="0 0 14 9"><path d="M1,1 L6.800,6.800 L12.600,1" fill="none" stroke="#868686" stroke-width="2.100"/></svg>
<svg style="left:97.80000000000001px;top:557.0px;overflow:visible;" width="14" height="9" viewBox="0 0 14 9"><path d="M1,1 L6.800,6.800 L12.600,1" fill="none" stroke="#868686" stroke-width="2.100"/></svg>
<svg style="left:124.80000000000001px;top:587.0px;overflow:visible;" width="14" height="9" viewBox="0 0 14 9"><path d="M1,1 L6.800,6.800 L12.600,1" fill="none" stroke="#868686" stroke-width="2.100"/></svg>
<svg style="left:151.8px;top:617.0px;overflow:visible;" width="14" height="9" viewBox="0 0 14 9"><path d="M1,1 L6.800,6.800 L12.600,1" fill="none" stroke="#868686" stroke-width="2.100"/></svg>
<svg style="left:151.8px;top:677.0px;overflow:visible;" width="14" height="9" viewBox="0 0 14 9"><path d="M1,1 L6.800,6.800 L12.600,1" fill="none" stroke="#868686" stroke-width="2.100"/></svg>
<svg style="left:151.8px;top:737.0px;overflow:visible;" width="14" height="9" viewBox="0 0 14 9"><path d="M1,1 L6.800,6.800 L12.600,1" fill="none" stroke="#868686" stroke-width="2.100"/></svg>
<svg style="left:97.80000000000001px;top:857.0px;overflow:visible;" width="14" height="9" viewBox="0 0 14 9"><path d="M1,1 L6.800,6.800 L12.600,1" fill="none" stroke="#868686" stroke-width="2.100"/></svg>
<svg style="left:150px;top:941.5px;overflow:visible;" width="24.0" height="18.0" viewBox="0 0 24.0 18.0"><g transform="scale(1.0)"><path d="M0.8,15.4 C-0.8,9 3.5,4.2 10.5,3.6 C15,3.200 18.500,2.600 21.200,0 C22.600,4.600 22.200,10 19.200,13.600 C15.500,17.800 7.500,17.600 3.600,14.600 C5.500,13.800 8.500,12.200 11,9.600 C7.500,11.800 4,13.600 0.800,15.400 Z" fill="#7fbf6a"/></g></svg>
<svg style="left:441px;top:212.70000000000002px;overflow:visible;" width="16" height="18" viewBox="0 0 16 18"><path d="M0.800,0.800 H14.800 V9.400 L7.800,16.600 L0.800,9.400 Z" fill="#fff" stroke="#d2d2d2" stroke-width="1.400"/><path d="M4,7 H11.600" stroke="#c6c6c6" stroke-width="1.500"/></svg>
<svg style="left:441px;top:443.7px;overflow:visible;" width="16" height="18" viewBox="0 0 16 18"><path d="M0.800,0.800 H14.800 V9.400 L7.800,16.600 L0.800,9.400 Z" fill="#fff" stroke="#d2d2d2" stroke-width="1.400"/><path d="M4,7 H11.600" stroke="#c6c6c6" stroke-width="1.500"/></svg>
<svg style="left:441px;top:575.6999999999999px;overflow:visible;" width="16" height="18" viewBox="0 0 16 18"><path d="M0.800,0.800 H14.800 V9.400 L7.800,16.600 L0.800,9.400 Z" fill="#fff" stroke="#d2d2d2" stroke-width="1.400"/><path d="M4,7 H11.600" stroke="#c6c6c6" stroke-width="1.500"/></svg>
<svg style="left:441px;top:773.6999999999999px;overflow:visible;" width="16" height="18" viewBox="0 0 16 18"><path d="M0.800,0.800 H14.800 V9.400 L7.800,16.600 L0.800,9.400 Z" fill="#fff" stroke="#d2d2d2" stroke-width="1.400"/><path d="M4,7 H11.600" stroke="#c6c6c6" stroke-width="1.500"/></svg>
<svg style="left:441px;top:373.59999999999997px;overflow:visible;" width="16" height="18" viewBox="0 0 16 18"><path d="M0.800,16.800 H14.800 V7.600 L7.800,0.600 L0.800,7.600 Z" fill="#fff" stroke="#d2d2d2" stroke-width="1.400"/><path d="M4,10.200 H11.600" stroke="#c6c6c6" stroke-width="1.500"/></svg>
<svg style="left:441px;top:505.59999999999997px;overflow:visible;" width="16" height="18" viewBox="0 0 16 18"><path d="M0.800,16.800 H14.800 V7.600 L7.800,0.600 L0.800,7.600 Z" fill="#fff" stroke="#d2d2d2" stroke-width="1.400"/><path d="M4,10.200 H11.600" stroke="#c6c6c6" stroke-width="1.500"/></svg>
<svg style="left:441px;top:703.6px;overflow:visible;" width="16" height="18" viewBox="0 0 16 18"><path d="M0.800,16.800 H14.800 V7.600 L7.800,0.600 L0.800,7.600 Z" fill="#fff" stroke="#d2d2d2" stroke-width="1.400"/><path d="M4,10.200 H11.600" stroke="#c6c6c6" stroke-width="1.500"/></svg>
<svg style="left:441px;top:901.6px;overflow:visible;" width="16" height="18" viewBox="0 0 16 18"><path d="M0.800,16.800 H14.800 V7.600 L7.800,0.600 L0.800,7.600 Z" fill="#fff" stroke="#d2d2d2" stroke-width="1.400"/><path d="M4,10.200 H11.600" stroke="#c6c6c6" stroke-width="1.500"/></svg>
<svg style="left:470.5px;top:433px;overflow:visible;" width="18" height="23" viewBox="0 0 18 23"><path d="M8.600,0.500 A7.600,7.600 0 0 1 13.300,14.200 L12.600,16.400 H4.600 L3.900,14.200 A7.600,7.600 0 0 1 8.600,0.500 Z" fill="#eda512"/><path d="M4.200,18 H13 M5.200,21 H12" stroke="#595959" stroke-width="1.500"/></svg>
<svg style="left:1895px;top:97px;overflow:visible;" width="24" height="20" viewBox="0 0 24 20"><text x="0" y="17.600" font-family="Liberation Sans, sans-serif" font-style="italic" font-weight="bold" font-size="21" fill="#707070">m</text></svg>
<svg style="left:1896.5px;top:209.5px;overflow:visible;" width="20" height="21" viewBox="0 0 20 21"><g transform="scale(0.93,0.87)"><ellipse cx="9.700" cy="3.600" rx="9" ry="3.300" fill="#6e6e6e"/>
<path d="M0.700,6.200 C0.700,10.500 18.700,10.500 18.700,6.200 V8.600 C18.700,13 0.700,13 0.700,8.600 Z M0.700,10.700 C0.700,15 18.700,15 18.700,10.700 V13.100 C18.700,17.500 0.700,17.500 0.700,13.100 Z M0.700,15.200 C0.700,19.500 18.700,19.500 18.700,15.200 V17.200 C18.700,21.600 0.700,21.600 0.700,17.200 Z" fill="#6e6e6e"/></g></svg>
<svg style="left:1895px;top:340px;overflow:visible;" width="20.0" height="13.0" viewBox="0 0 20.0 13.0"><g transform="scale(1.0)"><path d="M0.500,8 C0.500,4.600 4.200,3.600 6,5.400 C6.500,2.200 10.200,0.400 12.800,2.600 C14,3.600 15,3.400 15.800,2.200 L18.200,0.800 L19.500,0.600 L19.300,5 L18.200,4.600 C17.600,8.500 16,11.500 12.600,12.300 C10.200,12.800 8.600,11.400 7.800,10 C6.600,12.400 0.500,12.600 0.500,8 Z" fill="#6a6a6a"/></g></svg>
<svg style="left:1905.3px;top:368.5px;overflow:visible;" width="13" height="86" viewBox="0 0 13 86"><rect x="0" y="0" width="13" height="85.500" rx="6.400" fill="#55595c"/><rect x="0.800" y="3" width="3" height="78" rx="1.500" fill="#6d7174"/><rect x="3.600" y="40.0" width="7.600" height="1.300" fill="#46b552"/><rect x="3.600" y="42.7" width="7.600" height="1.300" fill="#46b552"/><rect x="3.600" y="45.4" width="7.600" height="1.300" fill="#46b552"/><rect x="3.600" y="48.1" width="7.600" height="1.300" fill="#46b552"/><rect x="3.600" y="50.8" width="7.600" height="1.300" fill="#46b552"/><rect x="3.600" y="53.5" width="7.600" height="1.300" fill="#46b552"/><rect x="3.600" y="56.2" width="7.600" height="1.300" fill="#46b552"/><rect x="3.600" y="58.9" width="7.600" height="1.300" fill="#46b552"/><rect x="3.600" y="61.6" width="7.600" height="1.300" fill="#46b552"/><rect x="3.600" y="64.3" width="7.600" height="1.300" fill="#46b552"/><rect x="3.600" y="67.0" width="7.600" height="1.300" fill="#46b552"/><rect x="3.600" y="69.7" width="7.600" height="1.300" fill="#46b552"/><rect x="3.600" y="72.4" width="7.600" height="1.300" fill="#46b552"/><rect x="3.600" y="75.1" width="7.600" height="1.300" fill="#46b552"/><rect x="3.600" y="77.8" width="7.600" height="1.300" fill="#46b552"/></svg>
<svg style="left:1899px;top:472.6px;overflow:visible;" width="15" height="18" viewBox="0 0 15 18"><rect x="0.0" y="0.0" width="2.800" height="3.300" fill="#b8dcea"/><rect x="3.6" y="0.0" width="2.800" height="3.300" fill="#7fc4de"/><rect x="7.2" y="0.0" width="2.800" height="3.300" fill="#7fc4de"/><rect x="10.8" y="0.0" width="2.800" height="3.300" fill="#b8dcea"/><rect x="0.0" y="4.5" width="2.800" height="3.300" fill="#7fc4de"/><rect x="3.6" y="4.5" width="2.800" height="3.300" fill="#7fc4de"/><rect x="7.2" y="4.5" width="2.800" height="3.300" fill="#b8dcea"/><rect x="10.8" y="4.5" width="2.800" height="3.300" fill="#7fc4de"/><rect x="0.0" y="9.0" width="2.800" height="3.300" fill="#7fc4de"/><rect x="3.6" y="9.0" width="2.800" height="3.300" fill="#b8dcea"/><rect x="7.2" y="9.0" width="2.800" height="3.300" fill="#7fc4de"/><rect x="10.8" y="9.0" width="2.800" height="3.300" fill="#7fc4de"/><rect x="0.0" y="13.5" width="2.800" height="3.300" fill="#b8dcea"/><rect x="3.6" y="13.5" width="2.800" height="3.300" fill="#7fc4de"/><rect x="7.2" y="13.5" width="2.800" height="3.300" fill="#7fc4de"/><rect x="10.8" y="13.5" width="2.800" height="3.300" fill="#b8dcea"/></svg>
<svg style="left:1896px;top:734.5px;overflow:visible;" width="20" height="18" viewBox="0 0 20 18"><rect x="2.500" y="0" width="6" height="5.500" fill="#5a5a5a"/><path d="M5.500,5 V9" stroke="#5a5a5a" stroke-width="1.500"/><path d="M5.600,6.600 L10.800,12 L5.600,17.400 L0.400,12 Z" fill="#5a5a5a"/><path d="M10,12 H14" stroke="#5a5a5a" stroke-width="1.500"/><rect x="13.200" y="8.600" width="6.800" height="6.800" fill="#5a5a5a"/></svg>
<div style="left:0px;top:958px;width:1920px;height:1px;background:#d1d1d1;"></div>
<div style="left:0px;top:959px;width:1920px;height:31px;background:#f2f2f2;"></div>
<div style="left:0px;top:990px;width:1920px;height:1px;background:#d1d1d1;"></div>
<div style="left:0px;top:991px;width:1920px;height:29px;background:#f2f2f2;"></div>
<div style="left:0px;top:1020px;width:1920px;height:11px;background:#161c28;"></div>
<div style="left:452px;top:1020px;width:72px;height:11px;background:#1e3650;"></div>
<div style="left:1682px;top:694.8px;width:236.5px;height:38.7px;background:#ffffff;border:1px solid #cdd5e6;border-radius:4px;box-sizing:border-box;box-shadow:0 1px 3px rgba(80,100,160,.25);"></div>
<div style="left:1913px;top:1021px;width:1.5px;height:10px;background:#8a8f98;"></div>
<div style="left:1734px;top:1029px;width:9px;height:2px;background:#e8eaee;"></div>
<div style="left:1746px;top:1029px;width:9px;height:2px;background:#e8eaee;"></div>
<div style="left:1761px;top:1029px;width:9px;height:2px;background:#e8eaee;"></div>
<div style="left:1773px;top:1029px;width:9px;height:2px;background:#e8eaee;"></div>
<div style="left:1788px;top:1029px;width:14px;height:2px;background:#e8eaee;"></div>
<span class="t" style="left:74.00px;top:965.81px;font-size:17px;color:#111;letter-spacing:-0.017px;">Dependencies</span>
<span class="t" style="left:241.00px;top:965.81px;font-size:17px;color:#111;letter-spacing:0.284px;">Version Control</span>
<span class="t" style="left:418.00px;top:965.81px;font-size:17px;color:#111;letter-spacing:-0.078px;">TODO</span>
<span class="t" style="left:520.00px;top:965.81px;font-size:17px;color:#111;letter-spacing:0.208px;">Endpoints</span>
<span class="t" style="left:652.00px;top:965.81px;font-size:17px;color:#111;letter-spacing:0.338px;">Build</span>
<span class="t" style="left:745.00px;top:965.81px;font-size:17px;color:#111;letter-spacing:0.086px;">Problems</span>
<span class="t" style="left:872.00px;top:965.81px;font-size:17px;color:#111;letter-spacing:0.694px;">Auto-build</span>
<span class="t" style="left:1012.00px;top:965.81px;font-size:17px;color:#111;letter-spacing:0.227px;">Spring</span>
<span class="t" style="left:1117.00px;top:965.81px;font-size:17px;color:#111;letter-spacing:0.330px;">Profiler</span>
<span class="t" style="left:1229.00px;top:965.81px;font-size:17px;color:#111;letter-spacing:0.406px;">Terminal</span>
<span class="t" style="left:1351.00px;top:965.81px;font-size:17px;color:#111;letter-spacing:0.104px;">Run</span>
<span class="t" style="left:1438.00px;top:965.81px;font-size:17px;color:#111;letter-spacing:0.106px;">Nocalhost Console</span>
<span class="t" style="left:1798.50px;top:965.81px;font-size:17px;color:#111;letter-spacing:-0.062px;">Event Log</span>
<span class="t" style="left:1332.00px;top:994.74px;font-size:19.5px;color:#111;letter-spacing:0.251px;">Waiting for enter DevMode</span>
<span class="t" style="left:1586.00px;top:994.74px;font-size:19.5px;color:#111;letter-spacing:-0.276px;">158:21</span>
<span class="t" style="left:1661.00px;top:994.74px;font-size:19.5px;color:#9b9b9b;letter-spacing:-1.730px;">CRLF</span>
<span class="t" style="left:1723.00px;top:994.74px;font-size:19.5px;color:#a5a5a5;letter-spacing:-0.450px;">UTF-8</span>
<span class="t" style="left:1793.00px;top:994.74px;font-size:19.5px;color:#222;letter-spacing:-0.445px;">4 spaces</span>
<span class="t" style="left:1754.00px;top:1001.51px;font-size:17.3px;color:rgba(248,248,248,0.8);letter-spacing:0.314px;font-family:'Liberation Serif','Noto Serif CJK SC',serif;text-shadow:0 0 1.5px rgba(90,90,90,.75),0 0 1px rgba(90,90,90,.5);">@稀土掘金技术社区</span>
<span class="t" style="left:1708.00px;top:702.05px;font-size:21.5px;color:#1a6fdc;font-weight:bold;">英</span>
<svg style="left:1650px;top:686px;overflow:visible;" width="52" height="50" viewBox="0 0 52 50"><defs><linearGradient id="lgS" x1="0" y1="0" x2="0.300" y2="1"><stop offset="0" stop-color="#f5762f"/><stop offset="1" stop-color="#ea4516"/></linearGradient></defs>
<g transform="rotate(-13 25.500 25.350)"><rect x="5" y="5.600" width="41" height="39.500" rx="6" fill="url(#lgS)"/>
<path d="M36.500,15.200 C33,11.600 21,11 15.800,15.200 C11.500,19 14,23.600 20.500,24.800 C26,25.800 31.500,25.800 33,27.800 C34,29.800 31,32 25,32.200 C20,32.400 15.500,31.200 12.600,29 L11.800,34.400 C16,37 22,37.800 27.600,37.200 C35,36.400 39.600,33 39.200,28.200 C38.800,23.600 33.500,22 27.500,21.200 C22.500,20.600 19.500,20 19.600,18.400 C19.800,16.400 24.500,15.800 28.600,16.400 C31.500,16.800 34,17.800 35.600,19.200 Z" fill="#fff"/></g></svg>
<svg style="left:1748px;top:707px;overflow:visible;" width="18" height="17" viewBox="0 0 18 17"><circle cx="3" cy="3.300" r="2.300" fill="#1a6fdc"/><path d="M12.800,6 C15.200,5.600 16.800,7.600 16.200,10.200 C15.700,12.600 14,14.600 11.800,15.600 L11.200,14.400 C12.600,13.600 13.400,12.400 13.500,11 C11.500,11 10.600,9.600 10.800,8.200 C11,7 11.800,6.200 12.800,6 Z" fill="#1a6fdc"/></svg>
<svg style="left:1782.5px;top:702.5px;overflow:visible;" width="18" height="24" viewBox="0 0 18 24"><rect x="4.700" y="0" width="8.200" height="15" rx="4.100" fill="#1a6fdc"/><path d="M1.200,10 C1.200,20 16.400,20 16.400,10" fill="none" stroke="#1a6fdc" stroke-width="2.400"/><path d="M6.300,21.900 H11.300" stroke="#1a6fdc" stroke-width="2"/></svg>
<svg style="left:1817.1px;top:705.6px;overflow:visible;" width="22" height="18" viewBox="0 0 22 18"><rect x="0" y="0" width="21.800" height="17.500" rx="2.800" fill="#1a6fdc"/><rect x="2.9" y="2.4" width="3.900" height="3.400" rx="0.500" fill="#fff"/><rect x="2.9" y="7.3" width="3.900" height="3.400" rx="0.500" fill="#fff"/><rect x="7.3" y="2.4" width="3.900" height="3.400" rx="0.500" fill="#fff"/><rect x="7.3" y="7.3" width="3.900" height="3.400" rx="0.500" fill="#fff"/><rect x="11.8" y="2.4" width="3.900" height="3.400" rx="0.500" fill="#fff"/><rect x="11.8" y="7.3" width="3.900" height="3.400" rx="0.500" fill="#fff"/><rect x="16.1" y="2.4" width="3.900" height="3.400" rx="0.500" fill="#fff"/><rect x="16.1" y="7.3" width="3.900" height="3.400" rx="0.500" fill="#fff"/><rect x="2.900" y="11.900" width="4.600" height="3.300" rx="0.500" fill="#fff"/><rect x="8.900" y="11.900" width="11.100" height="3.300" rx="0.500" fill="#fff"/></svg>
<svg style="left:1853px;top:704.6px;overflow:visible;" width="22" height="20" viewBox="0 0 22 20"><path d="M7.200,0 Q11,3.600 14.800,0 L18.500,0.600 Q22,1.500 21.800,4.500 L21.200,7.200 Q20.800,8.600 19.200,8.200 L17.400,7.600 V18 Q17.400,20 15.400,20 H6.600 Q4.600,20 4.600,18 V7.600 L2.800,8.200 Q1.200,8.600 0.800,7.200 L0.200,4.500 Q0,1.500 3.500,0.600 Z" fill="#1a6fdc"/></svg>
<svg style="left:1890.5px;top:706px;overflow:visible;" width="20" height="19" viewBox="0 0 20 19"><rect x="0" y="0" width="8.600" height="8.400" rx="2" fill="#1a6fdc"/><rect x="11" y="0" width="8.600" height="8.400" rx="2" fill="#1a6fdc"/><rect x="14" y="2.900" width="2.700" height="2.700" fill="#fff"/><rect x="0" y="10.600" width="8.600" height="8.400" rx="2" fill="#1a6fdc"/><rect x="11" y="10.600" width="8.600" height="8.400" rx="2" fill="#1a6fdc"/></svg>
<svg style="left:50px;top:967.5px;overflow:visible;" width="18" height="17" viewBox="0 0 18 17"><path d="M9,0 L18,4.400 L9,8.800 L0,4.400 Z" fill="#6e6e6e"/><path d="M1.200,8.200 L9,12 L16.800,8.200 M1.200,12.200 L9,16 L16.800,12.200" fill="none" stroke="#6e6e6e" stroke-width="1.700"/></svg>
<svg style="left:218.5px;top:967.5px;overflow:visible;" width="14" height="17" viewBox="0 0 14 17"><circle cx="3" cy="2.800" r="2.300" fill="#6e6e6e"/><circle cx="3" cy="14" r="2.300" fill="#6e6e6e"/><circle cx="11" cy="4.600" r="2.300" fill="#6e6e6e"/><path d="M3,3 V14 M11,5 C11,9.500 3,8 3,12" fill="none" stroke="#6e6e6e" stroke-width="1.700"/></svg>
<svg style="left:395.7px;top:969.5px;overflow:visible;" width="15" height="12.5" viewBox="0 0 15 12.5"><rect x="0" y="0.0" width="2.700" height="2.600" fill="#6e6e6e"/><rect x="4.600" y="0.0" width="10.400" height="2.600" fill="#6e6e6e"/><rect x="0" y="4.8" width="2.700" height="2.600" fill="#6e6e6e"/><rect x="4.600" y="4.8" width="10.400" height="2.600" fill="#6e6e6e"/><rect x="0" y="9.6" width="2.700" height="2.600" fill="#6e6e6e"/><rect x="4.600" y="9.6" width="10.400" height="2.600" fill="#6e6e6e"/></svg>
<svg style="left:493.7px;top:966px;overflow:visible;" width="22" height="19" viewBox="0 0 22 19"><path d="M4.400,14.800 L12,3.300 L17.500,14.800" fill="none" stroke="#6e6e6e" stroke-width="2.300"/><circle cx="12" cy="3.400" r="3.100" fill="#6e6e6e"/><circle cx="4.300" cy="14.800" r="3.400" fill="#6e6e6e"/><circle cx="17.500" cy="14.800" r="3.400" fill="#6e6e6e"/></svg>
<svg style="left:627.5px;top:967.5px;overflow:visible;" width="20" height="18" viewBox="0 0 20 18"><path d="M2,6.800 L9,1.800" stroke="#6e6e6e" stroke-width="4.400"/><path d="M6,4.600 L15.600,14.400" stroke="#6e6e6e" stroke-width="3.100"/><circle cx="16.200" cy="14.500" r="3.300" fill="#3dcc3d"/></svg>
<svg style="left:721.5px;top:966.5px;overflow:visible;" width="16" height="16" viewBox="0 0 16 16"><circle cx="8" cy="8" r="7.800" fill="#6e6e6e"/><path d="M8,3.400 V9.200" stroke="#f2f2f2" stroke-width="2.200"/><circle cx="8" cy="12" r="1.300" fill="#f2f2f2"/></svg>
<svg style="left:848.7px;top:968.5px;overflow:visible;" width="17" height="14" viewBox="0 0 17 14"><path d="M8.200,0 L16.400,13.600 H0 Z" fill="#6e6e6e"/><path d="M8.200,4.600 V9.200" stroke="#f2f2f2" stroke-width="1.800"/><circle cx="8.200" cy="11.300" r="1.100" fill="#f2f2f2"/></svg>
<svg style="left:987.5px;top:966.2px;overflow:visible;" width="19.200000000000003" height="14.4" viewBox="0 0 19.200000000000003 14.4"><g transform="scale(0.8)"><path d="M0.8,15.4 C-0.8,9 3.5,4.2 10.5,3.6 C15,3.200 18.500,2.600 21.200,0 C22.600,4.600 22.200,10 19.200,13.600 C15.500,17.800 7.500,17.600 3.600,14.600 C5.500,13.800 8.500,12.200 11,9.600 C7.500,11.800 4,13.600 0.800,15.400 Z" fill="#6e6e6e"/></g></svg>
<svg style="left:1091.7px;top:965.5px;overflow:visible;" width="20" height="19" viewBox="0 0 20 19"><path d="M11.500,2 A6.600,6.600 0 1 0 6.200,14.300" fill="none" stroke="#6e6e6e" stroke-width="1.700"/><path d="M8,4.500 V8.600 H11.600" fill="none" stroke="#6e6e6e" stroke-width="1.600"/><path d="M10.200,8.400 L19.400,13.400 L10.200,18.400 Z" fill="#6e6e6e" stroke="#f2f2f2" stroke-width="0.800"/><path d="M0.500,3.400 L3.200,0.800" stroke="#6e6e6e" stroke-width="1.500"/></svg>
<svg style="left:1205.7px;top:967.5px;overflow:visible;" width="17" height="15" viewBox="0 0 17 15"><rect x="0" y="0" width="16.800" height="14.500" fill="#6e6e6e"/><path d="M2.600,3.400 L6.800,6.800 L2.600,10.200" fill="none" stroke="#f2f2f2" stroke-width="1.600"/><path d="M8.200,11 H13.600" stroke="#f2f2f2" stroke-width="1.600"/></svg>
<svg style="left:1329.2px;top:968.7px;overflow:visible;" width="12" height="14" viewBox="0 0 12 14"><path d="M0,0 L12,6.900 L0,13.800 Z" fill="#6e6e6e"/></svg>
<svg style="left:1413.7px;top:969.8px;overflow:visible;" width="19.0" height="12.35" viewBox="0 0 19.0 12.35"><g transform="scale(0.95)"><path d="M0.500,8 C0.500,4.600 4.200,3.600 6,5.400 C6.500,2.200 10.200,0.400 12.800,2.600 C14,3.600 15,3.400 15.800,2.200 L18.200,0.800 L19.500,0.600 L19.300,5 L18.200,4.600 C17.600,8.500 16,11.500 12.600,12.300 C10.200,12.800 8.600,11.400 7.800,10 C6.600,12.400 0.500,12.600 0.500,8 Z" fill="#6a6a6a"/></g></svg>
<svg style="left:1772.5px;top:966.5px;overflow:visible;" width="21" height="19" viewBox="0 0 21 19"><path d="M10,1.300 A8.300,8.300 0 1 0 10,17.900 H18.300 V9.600 A8.300,8.300 0 0 0 10,1.300 Z" fill="none" stroke="#7a7a7a" stroke-width="2"/></svg>
<svg style="left:8.7px;top:998px;overflow:visible;" width="19" height="18" viewBox="0 0 19 18"><rect x="4" y="0.700" width="14" height="13.600" fill="#f2f2f2" stroke="#7a7a7a" stroke-width="1.400"/><path d="M0.700,4.600 V17.300 H14" fill="none" stroke="#7a7a7a" stroke-width="1.400"/></svg>
<svg style="left:1301.5px;top:999.5px;overflow:visible;" width="24" height="16" viewBox="0 0 24 16"><circle cx="4" cy="8.600" r="3.600" fill="#f05fd0"/><circle cx="9.600" cy="5.200" r="4.600" fill="#8e55e8"/><path d="M8,8 C9,14.500 17,15.500 19.600,9" fill="none" stroke="#3ccbe8" stroke-width="4.200" stroke-linecap="round"/><rect x="17" y="0.500" width="5.600" height="5.600" fill="#1f6fe0"/></svg>
<svg style="left:1883.5px;top:996.5px;overflow:visible;" width="25" height="22" viewBox="0 0 25 22"><path d="M5,14 C0.500,13.500 0.500,7.500 5,7 C5.500,2 12.500,0.500 15,5 C19.500,4.500 21,9 19,11.500 L14.500,11.500 L13.500,14 Z" fill="#8a8a8a"/><circle cx="11" cy="7.600" r="2.600" fill="#f2f2f2"/><path d="M10.200,10 h1.600 v2 h-1.600z" fill="#f2f2f2"/><circle cx="17.600" cy="16" r="3.800" fill="none" stroke="#7a7a7a" stroke-width="2.200" stroke-dasharray="2 1.300"/></svg>
<svg style="left:1833px;top:1023.5px;overflow:visible;" width="6" height="6" viewBox="0 0 6 6"><circle cx="2.700" cy="2.600" r="2.600" fill="#f0141e"/></svg>
</div></body></html>
